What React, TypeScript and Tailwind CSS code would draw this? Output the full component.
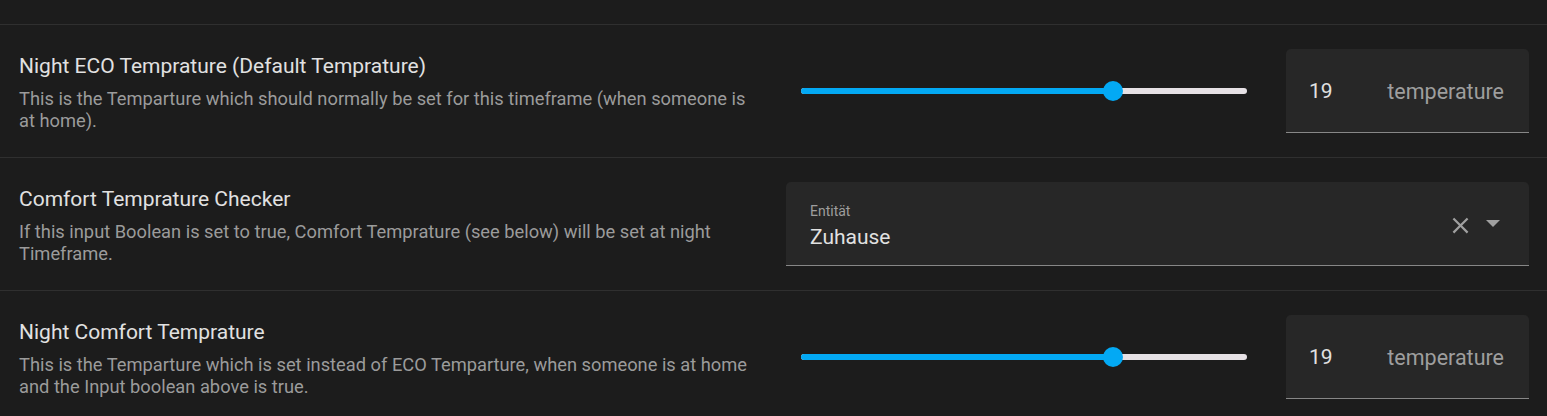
import React from "react";

const rows = [
  {
    title: "Night ECO Temprature (Default Temprature)",
    description:
      "This is the Temparture which should normally be set for this timeframe (when someone is at home).",
    kind: "slider" as const,
    value: 19,
  },
  {
    title: "Comfort Temprature Checker",
    description:
      "If this input Boolean is set to true, Comfort Temprature (see below) will be set at night Timeframe.",
    kind: "entity" as const,
    value: 0,
  },
  {
    title: "Night Comfort Temprature",
    description:
      "This is the Temparture which is set instead of ECO Temparture, when someone is at home and the Input boolean above is true.",
    kind: "slider" as const,
    value: 19,
  },
];

const MIN = 5;
const MAX = 25;

const Slider = ({ value }: { value: number }) => {
  const pct = ((value - MIN) / (MAX - MIN)) * 100;
  return (
    <div className="flex-1 px-[15px] flex items-center h-[84px]">
      <div className="relative w-full h-[6px] rounded-full bg-[#e6e1e5]">
        <div
          className="absolute left-0 top-0 h-full rounded-full bg-[#03a9f4]"
          style={{ width: `${pct}%` }}
        />
        <div
          className="absolute top-1/2 w-[20px] h-[20px] -ml-[10px] -mt-[10px] rounded-full bg-[#03a9f4]"
          style={{ left: `${pct}%` }}
        />
      </div>
    </div>
  );
};

const NumberField = ({ value }: { value: number }) => (
  <div className="w-[243px] h-[84px] ml-[24px] flex items-center pt-[3px] pl-[23px] pr-[25px] bg-[#272727] rounded-t-[5px] border-b border-[#878787]">
    <span className="flex-1 text-[21px] text-[#e1e1e1]">{value}</span>
    <span className="text-[21.5px] text-[#9e9e9e]">temperature</span>
  </div>
);

const EntityPicker = () => (
  <div className="w-full h-[84px] flex items-center pl-[24px] pr-[29px] bg-[#272727] rounded-t-[5px] border-b border-[#878787]">
    <div className="flex-1 flex flex-col pt-[4px]">
      <span className="text-[14px] leading-[16px] text-[#9e9e9e]">Entität</span>
      <span className="mt-[6px] text-[21px] leading-[24px] text-[#e1e1e1]">
        Zuhause
      </span>
    </div>
    <svg width="27" height="27" viewBox="0 0 24 24" className="mt-[4px] text-[#a0a0a0]">
      <path
        fill="currentColor"
        d="M19,6.41L17.59,5L12,10.59L6.41,5L5,6.41L10.59,12L5,17.59L6.41,19L12,13.41L17.59,19L19,17.59L13.41,12L19,6.41Z"
      />
    </svg>
    <svg width="14" height="7" viewBox="0 0 14 7" className="ml-[12px] text-[#a0a0a0]">
      <path fill="currentColor" d="M0 0H14L7 7Z" />
    </svg>
  </div>
);

export default function App() {
  return (
    <div
      className="w-[1547px] h-[416px] overflow-hidden bg-[#1c1c1c]"
      style={{ fontFamily: "Roboto, 'Liberation Sans', sans-serif" }}
    >
      <div className="h-[24px]" />
      {rows.map((row) => (
        <div
          key={row.title}
          className="flex items-center border-t border-[#2f2f2f] pl-[19px] pr-[18px] py-[24px]"
        >
          <div className="flex-1 pr-[27px] pt-[4px]">
            <div className="text-[21px] leading-[24px] text-[#e1e1e1]">
              {row.title}
            </div>
            <div className="mt-[10px] text-[18.3px] leading-[22px] text-[#9b9b9b]">
              {row.description}
            </div>
          </div>
          <div className="w-[743px] flex items-center">
            {row.kind === "slider" ? (
              <>
                <Slider value={row.value} />
                <NumberField value={row.value} />
              </>
            ) : (
              <EntityPicker />
            )}
          </div>
        </div>
      ))}
    </div>
  );
}
